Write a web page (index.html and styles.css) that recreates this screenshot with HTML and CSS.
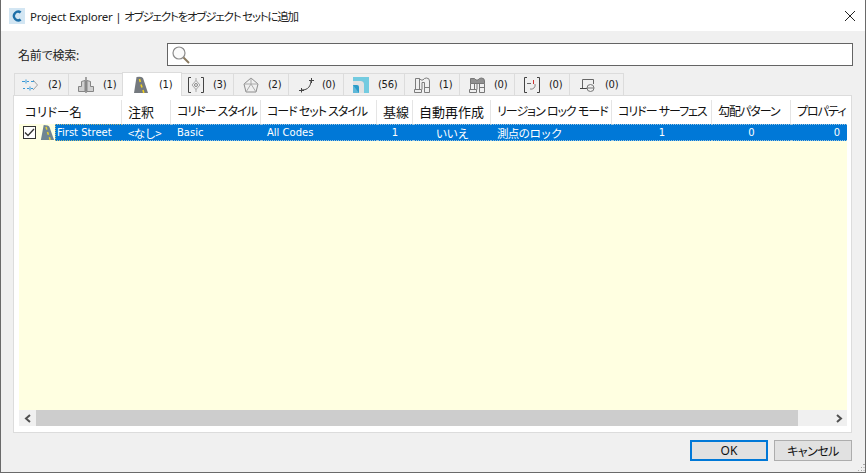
FILE: index.html
```html
<!DOCTYPE html>
<html lang="ja">
<head>
<meta charset="utf-8">
<title>Project Explorer</title>
<link rel="stylesheet" href="styles.css">
</head>
<body>
<div class="window">
  <header class="titlebar">
    <svg class="app-icon" width="16" height="16" viewBox="0 0 16 16"><rect width="16" height="16" fill="#d3e6f3"/><path d="M12.500 3.500 A5.500 5.500 0 1 0 12.500 12.500 L10.800 10.400 A3 3 0 1 1 10.800 5.600 Z" fill="#1d6fa8"/></svg>
    <span class="title">Project Explorer | <span class="title-jp">オブジェクトをオブジェクト セットに追加</span></span>
    <svg class="close" width="12" height="12" viewBox="0 0 12 12"><path d="M1 1 L11 11 M11 1 L1 11" stroke="#222" stroke-width="1" fill="none"/></svg>
  </header>
  <div class="content">
    <div class="search-row">
      <label class="search-label">名前で検索:</label>
      <div class="search-box">
        <svg width="20" height="20" viewBox="0 0 20 20"><circle cx="8" cy="8" r="6" fill="#fafafa" stroke="#8a8a8a" stroke-width="1.200"/><path d="M12.500 12.500 L18 18" stroke="#8a7a60" stroke-width="2"/></svg>
      </div>
    </div>
    <div class="tabs">
      <div class="tab tab-a"><svg width="16" height="16" viewBox="0 0 16 16" fill="none"><path d="M0 4.500H3M5 4.500H7M9 4.500H12M1 11.500H3M5 11.500H7M9 11.500H11" stroke="#3a9ad8"/><path d="M4 2.500V6.500M8 9.500V13.500" stroke="#3a9ad8"/><path d="M11 3 L15.500 8 L11 13" stroke="#a0a0a0"/></svg><span>(2)</span></div>
      <div class="tab tab-b"><svg width="16" height="16" viewBox="0 0 16 16"><path d="M0.500 9.500 L3.500 9.500 L3.500 4.500 L7 3.500 L7 14.500 L0.500 14.500Z M9 3.500 L12.500 4.500 L12.500 9.500 L15.500 9.500 L15.500 14.500 L9 14.500Z" fill="#d0d0d0" stroke="#858585"/><path d="M8 0V16" stroke="#555"/></svg><span>(1)</span></div>
      <div class="tab active"><svg width="15" height="18" viewBox="0 0 15 18"><path d="M1 17 L3.500 1 Q8 0 10 2 L15 17Z" fill="#74797e"/><path d="M6.500 3 L7.300 6 M8 8.500 L9 11.500 M10 14 L10.800 17" stroke="#f0d020" stroke-width="1.600"/></svg><span>(1)</span></div>
      <div class="tab tab-d"><svg width="16" height="16" viewBox="0 0 16 16" fill="none"><path d="M3 0.500H0.500V15.500H3M13 0.500H15.500V15.500H13" stroke="#444"/><path d="M8 3.500 L12 8 L8 12.500 L4 8Z" stroke="#a8a8a8"/><circle cx="8" cy="8" r="1.500" stroke="#888"/><path d="M8 1V4M8 12V15" stroke="#a8a8a8"/></svg><span>(3)</span></div>
      <div class="tab"><svg width="16" height="16" viewBox="0 0 16 16" fill="none" stroke="#8c8c8c"><path d="M8 1 L15 7 L13 15 L3 15 L1 7Z"/><path d="M1 7H15M3 15 L8 7 L13 15M8 1V7" stroke="#aaa"/></svg><span>(2)</span></div>
      <div class="tab tab-f"><svg width="18" height="16" viewBox="0 0 18 16" fill="none" stroke="#444"><path d="M4 13 C10 13 13 9 13 3"/><path d="M1 13.500H6M3.500 11V15.500M11 3.500H16M13.500 1V6"/></svg><span>(0)</span></div>
      <div class="tab tab-g"><svg width="16" height="16" viewBox="0 0 16 16"><rect width="16" height="16" fill="#2b9bc8"/><path d="M0 0H16V16H11V7 Q11 4 8 4H0Z" fill="#73cbe0"/><path d="M0 4H8 Q11 4 11 7V16H6V10 Q6 8 4 8H0Z" fill="#e2e2e2"/><path d="M0 8 L6 16H0Z" fill="#5fb8d8"/></svg><span>(56)</span></div>
      <div class="tab"><svg width="16" height="16" viewBox="0 0 16 16" fill="none" stroke="#7d7d7d"><path d="M1.500 1.500H5.500L7 3H9Q10 1 12.500 1Q15.500 1 15.500 4V15.500H10.500V5.500L8 5.500V12.500M1.500 1.500V12.500M5.500 1.500V12.500M0.500 12.500H7.500V15.500H0.500ZM10.500 10.500H15.500"/></svg><span>(1)</span></div>
      <div class="tab"><svg width="16" height="16" viewBox="0 0 16 16" fill="none" stroke="#777"><path d="M1.500 1.500H5.500L7 3H9Q10 1 12.500 1Q15.500 1 15.500 4V6.500H1.500Z" fill="#909090"/><path d="M8 6.500V12.500M1.500 6.500V12.500M5.500 6.500V12.500M0.500 12.500H7.500V15.500H0.500ZM10.500 6.500V15.500H15.500V6.500M10.500 10.500H15.500"/></svg><span>(0)</span></div>
      <div class="tab"><svg width="16" height="16" viewBox="0 0 16 16" fill="none"><path d="M3 0.500H0.500V15.500H3M13 0.500H15.500V15.500H13" stroke="#444"/><path d="M3 6.500H7" stroke="#666"/><path d="M9.500 3V7" stroke="#c33"/><path d="M11 7 A4 4 0 0 1 6 12" stroke="#888"/></svg><span>(0)</span></div>
      <div class="tab tab-k"><svg width="15" height="16" viewBox="0 0 15 16" fill="none"><path d="M2.500 11V2.500H13.500V7" stroke="#666"/><path d="M0 11.500H7" stroke="#444"/><circle cx="10.500" cy="11" r="3.500" stroke="#777"/><path d="M7 11H14" stroke="#777"/></svg><span>(0)</span></div>
    </div>
    <div class="panel">
      <div class="grid">
        <div class="row header">
          <div class="cell c1">コリドー名</div>
          <div class="cell c2">注釈</div>
          <div class="cell c3 kana">コリドー スタイル</div>
          <div class="cell c4 kana">コード セット スタイル</div>
          <div class="cell c5">基線</div>
          <div class="cell c6">自動再作成</div>
          <div class="cell c7 kana">リージョン ロック モード</div>
          <div class="cell c8 kana">コリドー サーフェス</div>
          <div class="cell c9 kana">勾配パターン</div>
          <div class="cell c10 kana">プロパティ</div>
        </div>
        <div class="body">
          <div class="row data">
            <div class="cell c1 first">
              <span class="check"><svg width="11" height="11" viewBox="0 0 11 11" fill="none"><path d="M1 5.500 L4 8.500 L10 2" stroke="#333" stroke-width="1.300"/></svg></span>
              <svg class="road" width="16" height="17" viewBox="0 0 15 18"><path d="M1 17 L4 1 Q9 1 10 3 L15 17Z" fill="#6f8593"/><path d="M6.500 3 L7.300 6 M8 8.500 L9 11.500 M10 14 L10.800 17" stroke="#e8d030" stroke-width="1.600"/></svg>
              <span class="name">First Street</span>
            </div>
            <div class="cell c2 sel"><span class="jp">&lt;なし&gt;</span></div>
            <div class="cell c3 sel">Basic</div>
            <div class="cell c4 sel">All Codes</div>
            <div class="cell c5 sel ctr">1</div>
            <div class="cell c6 sel ctr"><span class="jp">いいえ</span></div>
            <div class="cell c7 sel"><span class="jp">測点のロック</span></div>
            <div class="cell c8 sel ctr">1</div>
            <div class="cell c9 sel ctr">0</div>
            <div class="cell c10 sel ctr">0</div>
          </div>
        </div>
        <div class="scrollbar">
          <div class="arrow"><svg width="8" height="9" viewBox="0 0 8 9" fill="none"><path d="M6 1 L2 4.500 L6 8" stroke="#505050" stroke-width="2"/></svg></div>
          <div class="thumb"></div>
          <div class="arrow"><svg width="8" height="9" viewBox="0 0 8 9" fill="none"><path d="M2 1 L6 4.500 L2 8" stroke="#505050" stroke-width="2"/></svg></div>
        </div>
      </div>
    </div>
    <div class="actions">
      <button class="btn primary">OK</button>
      <button class="btn btn-jp">キャンセル</button>
    </div>
  </div>
  <svg class="grip" width="7" height="7" viewBox="0 0 7 7" fill="#a8a8a8"><rect x="5" y="0" width="2" height="1"/><rect x="3" y="3" width="1" height="1"/><rect x="5.500" y="3" width="1" height="1"/><rect x="0" y="6" width="1" height="1"/><rect x="3" y="6" width="1" height="1"/><rect x="5.500" y="6" width="1" height="1"/></svg>
</div>
</body>
</html>
```
FILE: styles.css
```css
* { box-sizing: border-box; }
html, body { margin: 0; padding: 0; }
body {
  width: 866px;
  height: 473px;
  overflow: hidden;
  font-family: "Noto Sans", "Noto Sans CJK JP", sans-serif;
  font-feature-settings: "palt";
  color: #111;
}
.window {
  position: relative;
  width: 866px;
  height: 473px;
  background: #f0f0f0;
  border-left: 1px solid #6a6a6a;
  border-right: 1px solid #6a6a6a;
  border-bottom: 1px solid #6a6a6a;
  display: flex;
  flex-direction: column;
}
.titlebar {
  height: 31px;
  background: #fff;
  display: flex;
  align-items: center;
  padding-left: 8px;
  flex: none;
}
.title {
  margin-left: 5px;
  font-size: 11.5px;
  letter-spacing: -0.2px;
  color: #222;
  white-space: nowrap;
}
.title-jp { font-size: 11.5px; letter-spacing: -1.2px; }
.close { margin-left: auto; margin-right: 9px; }
.content {
  flex: 1;
  display: flex;
  flex-direction: column;
  padding: 12px 12px 0 12px;
}
.search-row { display: flex; align-items: center; height: 23px; }
.search-label { font-size: 12px; width: 154px; padding-left: 5px; color: #222; letter-spacing: -0.2px; }
.search-box {
  width: 686px;
  height: 23px;
  background: #fff;
  border: 1px solid #646464;
  display: flex;
  align-items: center;
  padding-left: 3px;
}
.tabs {
  display: flex;
  align-items: flex-end;
  height: 29px;
  padding-left: 1px;
  position: relative;
  z-index: 1;
}
.tab {
  width: 56px;
  height: 22px;
  margin-left: -1px;
  border: 1px solid #dcdcdc;
  border-bottom: none;
  background: #f0f0f0;
  display: flex;
  align-items: center;
  padding-left: 9px;
  font: 10px "DejaVu Sans", sans-serif;
  letter-spacing: -0.3px;
  color: #1a1a1a;
  flex: none;
}
.tab span { margin-left: 9px; }
.tab-a { width: 55px; padding-left: 7px; margin-left: 0; }
.tab-a span { margin-left: 10px; }
.tab-b { width: 55px; }
.tab.active {
  width: 60px;
  height: 24px;
  background: #fff;
  margin-bottom: -1px;
  padding-left: 10px;
  z-index: 2;
  position: relative;
}
.tab.active span { margin-left: 11px; }
.tab-d { width: 53px; padding-left: 6px; }
.tab-f span { margin-left: 6px; }
.tab-g { width: 62px; }
.tab-k { width: 55px; padding-left: 10px; }
.tab-k span { margin-left: 10px; }
.panel {
  width: 839px;
  height: 338px;
  background: #fff;
  border: 1px solid #dcdcdc;
  padding: 4px 4px 5px 5px;
  flex: none;
}
.grid {
  height: 100%;
  display: flex;
  flex-direction: column;
  overflow: hidden;
}
.row { display: flex; flex: none; }
.header { height: 24px; background: #fff; align-items: stretch; }
.cell { flex: none; }
.header .cell {
  font-size: 13px;
  color: #111;
  display: flex;
  align-items: center;
  padding-left: 6px;
  padding-bottom: 2px;
  border-right: 1px solid #e5e5e5;
  white-space: nowrap;
  overflow: hidden;
}
.header .c1 { font-size: 12.5px; }
.header .kana { font-size: 12px; letter-spacing: -1px; }
.c1 { width: 103px; }
.c2 { width: 49px; }
.c3 { width: 90px; }
.c4 { width: 116px; }
.c5 { width: 36px; }
.c6 { width: 78px; }
.c7 { width: 121px; }
.c8 { width: 100px; }
.c9 { width: 79px; }
.c10 { width: 92px; }
.body { flex: 1; background: #ffffe1; }
.data {
  height: 17px;
  font: 10px "DejaVu Sans", "Noto Sans CJK JP", sans-serif;
  color: #fff;
}
.data .cell { display: flex; align-items: center; white-space: nowrap; }
.jp { font-size: 11.5px; font-family: "Noto Sans CJK JP", sans-serif; letter-spacing: -0.7px; }
.sel {
  background: #0078d7;
  padding-left: 6px;
  border-top: 1px dotted #9cc4dc;
  border-bottom: 1px dotted #9cc4dc;
}
.ctr { justify-content: center; padding-left: 0; }
.first { padding-left: 4px; background: transparent; }
.check {
  width: 13px;
  height: 13px;
  background: #fff;
  border: 1px solid #333;
  display: flex;
  align-items: center;
  justify-content: center;
  flex: none;
}
.road { margin-left: 3px; flex: none; }
.name {
  flex: 1;
  height: 17px;
  line-height: 15px;
  background: #0078d7;
  border: 1px dotted #b8b880;
  border-right: none;
  padding-left: 1px;
}
.scrollbar { height: 16px; display: flex; background: #f0f0f0; flex: none; margin-bottom: 1px; }
.arrow { width: 17px; display: flex; align-items: center; justify-content: center; flex: none; }
.thumb { width: 762px; background: #cdcdcd; flex: none; margin-right: 32px; }
.actions {
  display: flex;
  justify-content: flex-end;
  gap: 6px;
  margin-top: 7px;
  padding-right: 1px;
}
.btn {
  width: 78px;
  height: 21px;
  background: #e1e1e1;
  border: 1px solid #adadad;
  font: 12px "Noto Sans", "Noto Sans CJK JP", sans-serif;
  font-feature-settings: "palt";
  color: #111;
  padding: 0;
}
.btn-jp { letter-spacing: -0.5px; }
.btn.primary { border: 2px solid #0078d7; }
.grip { position: absolute; right: 0; bottom: 1px; }
```
